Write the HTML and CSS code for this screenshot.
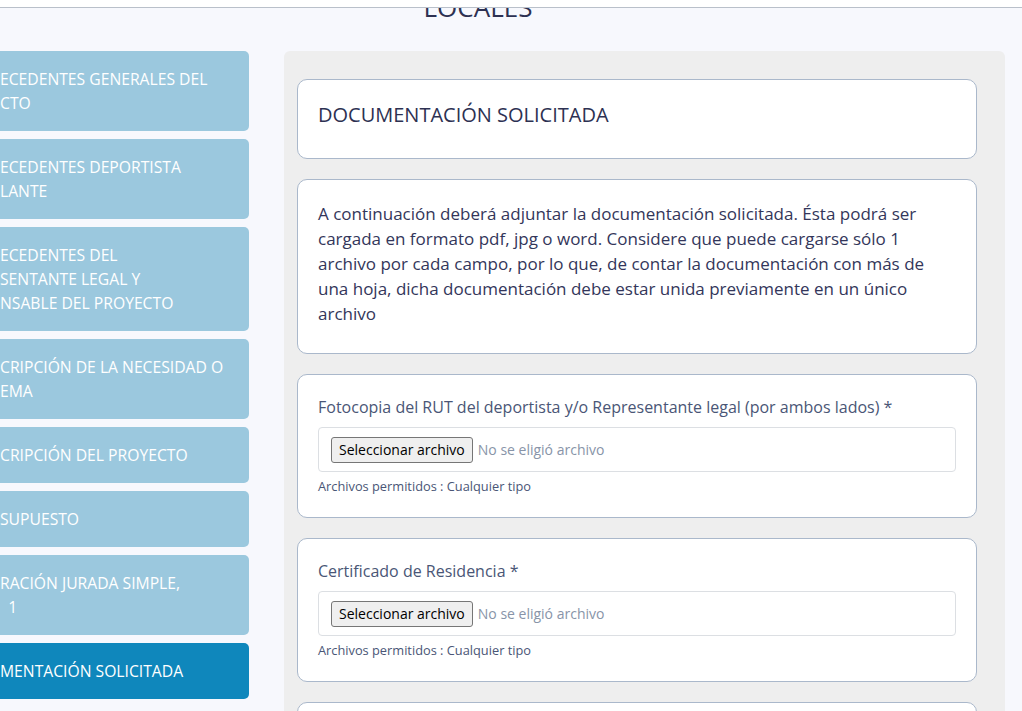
FILE: index.html
```html
<!DOCTYPE html>
<html lang="es">
<head>
<meta charset="utf-8">
<title>Documentación solicitada</title>
<link rel="stylesheet" href="styles.css">
</head>
<body>
<div class="topbar"></div>
<div class="page-title">LOCALES</div>
<div class="layout">
  <nav class="sidebar">
    <a class="step">ECEDENTES GENERALES DEL<br>CTO</a>
    <a class="step">ECEDENTES DEPORTISTA<br>LANTE</a>
    <a class="step">ECEDENTES DEL<br>SENTANTE LEGAL Y<br>NSABLE DEL PROYECTO</a>
    <a class="step">CRIPCIÓN DE LA NECESIDAD O<br>EMA</a>
    <a class="step">CRIPCIÓN DEL PROYECTO</a>
    <a class="step">SUPUESTO</a>
    <a class="step">RACIÓN JURADA SIMPLE,<br>&nbsp;&nbsp;1</a>
    <a class="step active">MENTACIÓN SOLICITADA</a>
  </nav>
  <main class="panel">
    <section class="card card-title">
      <h2>DOCUMENTACIÓN SOLICITADA</h2>
    </section>
    <section class="card card-text">
      <p>A continuación deberá adjuntar la documentación solicitada. Ésta podrá ser cargada en formato pdf, jpg o word. Considere que puede cargarse sólo 1 archivo por cada campo, por lo que, de contar la documentación con más de una hoja, dicha documentación debe estar unida previamente en un único archivo</p>
    </section>
    <section class="card card-field">
      <label class="field-label">Fotocopia del RUT del deportista y/o Representante legal (por ambos lados) *</label>
      <div class="file-box">
        <button class="file-btn" type="button">Seleccionar archivo</button>
        <span class="file-name">No se eligió archivo</span>
      </div>
      <div class="help">Archivos permitidos : Cualquier tipo</div>
    </section>
    <section class="card card-field">
      <label class="field-label">Certificado de Residencia *</label>
      <div class="file-box">
        <button class="file-btn" type="button">Seleccionar archivo</button>
        <span class="file-name">No se eligió archivo</span>
      </div>
      <div class="help">Archivos permitidos : Cualquier tipo</div>
    </section>
    <section class="card card-empty"></section>
  </main>
</div>
</body>
</html>
```
FILE: styles.css
```css
html, body {
  margin: 0;
  padding: 0;
  height: 711px;
  overflow: hidden;
}
body {
  background: #f7f8fd;
  font-family: "Open Sans", "Noto Sans", sans-serif;
  color: #2d3152;
  position: relative;
}
.topbar {
  position: absolute;
  top: 0;
  left: 0;
  right: 0;
  height: 7px;
  background: #ffffff;
  border-bottom: 1px solid #b9c0ca;
  z-index: 5;
}
.page-title {
  font-size: 26px;
  line-height: 30px;
  height: 51px;
  margin-top: -8px;
  padding-right: 66px;
  text-align: center;
  color: #2d3152;
  box-sizing: border-box;
}
.layout {
  display: flex;
  gap: 35px;
  align-items: flex-start;
  margin-top: 8px;
}
.sidebar {
  width: 259px;
  margin-left: -10px;
  display: flex;
  flex-direction: column;
  gap: 8px;
  flex-shrink: 0;
}
.step {
  display: block;
  background: #9bc8de;
  color: #ffffff;
  border-radius: 5px;
  padding: 16px 14px 16px 10px;
  font-size: 15.7px;
  line-height: 24px;
  white-space: nowrap;
}
.step.active {
  background: #0f87bc;
}
.panel {
  width: 721px;
  background: #eeeeee;
  border-radius: 6px 6px 0 0;
  padding: 28px 28px 0 13px;
  box-sizing: border-box;
  display: flex;
  flex-direction: column;
  gap: 20px;
  height: 700px;
}
.card {
  background: #ffffff;
  border: 1px solid #aab8cb;
  border-radius: 10px;
  padding: 0 20px;
  flex-shrink: 0;
}
.card-title {
  height: 78px;
  display: flex;
  align-items: center;
}
.card-title h2 {
  margin: 0;
  font-size: 20px;
  line-height: 28px;
  font-weight: 400;
  color: #2d3152;
  margin-top: -9px;
}
.card-text {
  padding-top: 21px;
  padding-bottom: 27px;
}
.card-text p {
  margin: 0;
  font-size: 17px;
  line-height: 25px;
  color: #33365a;
}
.card-field {
  padding-top: 20px;
  padding-bottom: 22px;
}
.field-label {
  display: block;
  font-size: 16px;
  line-height: 24px;
  color: #4a5676;
  margin-bottom: 8px;
}
.file-box {
  height: 45px;
  border: 1px solid #dcdfe3;
  border-radius: 4px;
  box-sizing: border-box;
  display: flex;
  align-items: center;
  padding-left: 12px;
  gap: 5px;
}
.file-btn {
  height: 26px;
  padding: 0 7px;
  font-family: "Open Sans", "Noto Sans", sans-serif;
  font-size: 14px;
  color: #000000;
  background: #efefef;
  border: 1px solid #767676;
  border-radius: 3px;
}
.file-name {
  font-size: 14px;
  color: #8894a8;
}
.help {
  font-size: 12.8px;
  line-height: 18px;
  color: #4a5676;
  margin-top: 5px;
}
.card-empty {
  height: 60px;
}
```
